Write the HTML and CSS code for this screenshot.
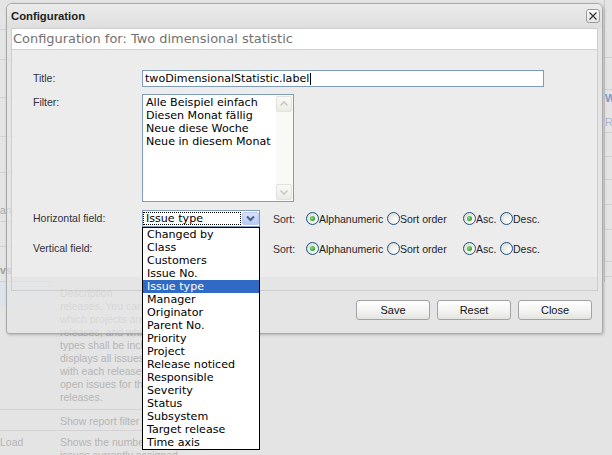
FILE: index.html
```html
<!DOCTYPE html>
<html>
<head>
<meta charset="utf-8">
<title>Configuration</title>
<link rel="stylesheet" href="styles.css">
</head>
<body>
<div class="page">
  <div class="bg-top">
    <div class="lstrip">
      <div class="lrow h30"></div>
      <div class="lrow h30"></div>
      <div class="lrow h38"></div>
      <div class="lrow h39"></div>
      <div class="lrow h36"></div>
      <div class="lrow h49 bottom-text">an</div>
      <div class="lrow h25"></div>
      <div class="lrow h35 bottom-text bold">vs</div>
    </div>
    <div class="rstrip">
      <div class="rrow h58"></div>
      <div class="rrow h32"></div>
      <div class="rrow h43"><span class="rw">W</span><span class="rre">Re</span></div>
      <div class="rrow h24"></div>
      <div class="rrow h23"></div>
      <div class="rrow h25"></div>
      <div class="rrow h25"></div>
      <div class="rrow h32"></div>
      <div class="rrow h15"></div>
    </div>
  </div>
  <div class="bg-row desc-row">
    <div class="c1"><div class="selrow"></div></div>
    <div class="c2 clip">Description<br>releases. You can define<br>which projects are<br>releases, and which issue<br>types shall be included<br>displays all issues<br>with each release<br>open issues for the<br>releases.</div>
  </div>
  <div class="bg-row filter-row">
    <div class="c1"></div>
    <div class="c2 clip">Show report filter</div>
  </div>
  <div class="bg-row load-row">
    <div class="c1">Load</div>
    <div class="c2"><span class="clipline">Shows the number of</span><br>issues currently assigned</div>
  </div>
</div>

<div class="dialog">
  <div class="titlebar">
    <span class="dtitle">Configuration</span>
    <span class="xbtn"><svg width="12" height="12" viewBox="0 0 12 12"><path d="M2.5 2.5 L9.5 9.5 M9.5 2.5 L2.5 9.5" stroke="#333" stroke-width="1.2" fill="none"/></svg></span>
  </div>
  <div class="frame">
    <div class="header">Configuration for: Two dimensional statistic</div>
    <div class="body">
      <div class="frow">
        <span class="lbl">Title:</span>
        <div class="input">twoDimensionalStatistic.label<span class="caret"></span></div>
      </div>
      <div class="frow top r2">
        <span class="lbl lbl-top">Filter:</span>
        <div class="listbox">
          <div class="items">
            <div>Alle Beispiel einfach</div>
            <div>Diesen Monat fällig</div>
            <div>Neue diese Woche</div>
            <div>Neue in diesem Monat</div>
          </div>
          <div class="sb">
            <span class="sbtn"><svg width="14" height="14" viewBox="0 0 14 14"><path d="M3.5 8.5 L7 5 L10.5 8.5" stroke="#c9c9c6" stroke-width="1.6" fill="none"/></svg></span>
            <span class="sbtn"><svg width="14" height="14" viewBox="0 0 14 14"><path d="M3.5 5.5 L7 9 L10.5 5.5" stroke="#c9c9c6" stroke-width="1.6" fill="none"/></svg></span>
          </div>
        </div>
      </div>
      <div class="frow r3">
        <span class="lbl">Horizontal field:</span>
        <div class="select open">
          <span class="val"><span class="focus">Issue type</span></span>
          <span class="arrow"><svg width="15" height="13" viewBox="0 0 15 13"><path d="M4 4.5 L7.5 8 L11 4.5" stroke="#4d6185" stroke-width="2" fill="none"/></svg></span>
          <div class="dropdown">
            <div>Changed by</div>
            <div>Class</div>
            <div>Customers</div>
            <div>Issue No.</div>
            <div class="hl">Issue type</div>
            <div>Manager</div>
            <div>Originator</div>
            <div>Parent No.</div>
            <div>Priority</div>
            <div>Project</div>
            <div>Release noticed</div>
            <div>Responsible</div>
            <div>Severity</div>
            <div>Status</div>
            <div>Subsystem</div>
            <div>Target release</div>
            <div>Time axis</div>
          </div>
        </div>
        <span class="sort">Sort:</span>
        <span class="opt o1"><span class="radio on"></span>Alphanumeric</span>
        <span class="opt o2"><span class="radio"></span>Sort order</span>
        <span class="opt o3"><span class="radio on"></span>Asc.</span>
        <span class="opt o4"><span class="radio"></span>Desc.</span>
      </div>
      <div class="frow r4">
        <span class="lbl">Vertical field:</span>
        <div class="select">
          <span class="val"></span>
          <span class="arrow"><svg width="15" height="13" viewBox="0 0 15 13"><path d="M4 4.5 L7.5 8 L11 4.5" stroke="#4d6185" stroke-width="2" fill="none"/></svg></span>
        </div>
        <span class="sort">Sort:</span>
        <span class="opt o1"><span class="radio on"></span>Alphanumeric</span>
        <span class="opt o2"><span class="radio"></span>Sort order</span>
        <span class="opt o3"><span class="radio on"></span>Asc.</span>
        <span class="opt o4"><span class="radio"></span>Desc.</span>
      </div>
    </div>
  </div>
  <div class="footer">
    <button class="btn">Save</button>
    <button class="btn">Reset</button>
    <button class="btn">Close</button>
  </div>
</div>
</body>
</html>
```

FILE: styles.css
```css
* { box-sizing: border-box; margin: 0; padding: 0; }
html, body { width: 612px; height: 455px; overflow: hidden; }
body {
  background: #e4e4e4;
  font-family: "Liberation Sans", Arial, sans-serif;
  font-size: 10.5px;
  color: #222;
  position: relative;
}

/* ---------- faded background page ---------- */
.page { width: 612px; height: 455px; color: #b5b5b5; font-size: 10.5px; }
.bg-top { display: flex; height: 282px; }
.lstrip { width: 53px; }
.lrow { border-bottom: 1px solid #d3d3d3; display: flex; padding-left: 0; }
.bottom-text { align-items: flex-end; padding-bottom: 5px; line-height: 12px; color: #a8a8a8; }
.bold { font-weight: bold; color: #a0a0a0; }
.rstrip { width: 8px; margin-left: auto; border-left: 1px solid #cbcbcb; overflow: hidden; }
.rrow { border-bottom: 1px solid #d0d0d0; display: flex; flex-direction: column; white-space: nowrap; }
.rw { color: #7f9ac4; font-weight: bold; margin-top: 2px; line-height: 12px; font-size: 11px; }
.rre { color: #a9b8cf; margin-top: 12px; line-height: 12px; font-size: 11px; }
.h15 { height: 15px; } .h23 { height: 23px; } .h24 { height: 24px; } .h25 { height: 25px; }
.h30 { height: 30px; } .h32 { height: 32px; } .h35 { height: 35px; } .h36 { height: 36px; }
.h38 { height: 38px; } .h39 { height: 39px; } .h43 { height: 43px; } .h49 { height: 49px; }
.h58 { height: 58px; }

.bg-row { display: flex; border-bottom: 1px solid #d3d3d3; width: 206px; }
.c1 { width: 60px; flex: none; }
.c2 { white-space: nowrap; line-height: 13px; overflow: hidden; flex: 1; }
.c2.clip { flex: none; width: 83px; }
.clipline { display: inline-block; width: 83px; overflow: hidden; vertical-align: top; }
.desc-row { height: 128px; }
.desc-row .c2 { padding-top: 5px; }
.selrow { width: 53px; height: 23px; background: #dde3ea; }
.filter-row { height: 21px; }
.filter-row .c2 { padding-top: 5px; }
.load-row { height: 40px; border-bottom: none; }
.load-row .c1, .load-row .c2 { padding-top: 5px; line-height: 13px; }

/* ---------- dialog ---------- */
.dialog {
  position: absolute;
  left: 6px; top: 3px;
  width: 597px; height: 331px;
  border: 1px solid #a9a9a9;
  border-radius: 6px 6px 3px 3px;
  background: rgba(230, 230, 230, 0.68);
  box-shadow: 1px 1px 3px rgba(0, 0, 0, 0.22);
  display: flex; flex-direction: column;
}
.titlebar {
  height: 24px; flex: none;
  display: flex; align-items: center; justify-content: space-between;
  padding: 0 2px 1px 4px;
  background: linear-gradient(#ebebeb, #dfdfdf);
  border-radius: 5px 5px 0 0;
}
.dtitle { font-weight: bold; font-size: 11.3px; color: #1e1e1e; }
.xbtn {
  width: 14px; height: 14px;
  border: 1px solid #9c9c9c; border-radius: 3px;
  background: linear-gradient(#fafafa, #e6e6e6);
  display: flex; align-items: center; justify-content: center;
}
.frame { margin: 0 4px; border: 1px solid #cdcdcd; padding-bottom: 13px; flex: none; }
.header {
  height: 21px; background: #fff; border-bottom: 1px solid #d2d2d2;
  font-family: "DejaVu Sans", Verdana, sans-serif;
  font-size: 12.95px; line-height: 17px; padding: 1px 0 0 1px;
  color: #727272;
  white-space: nowrap;
}
.body { height: 227px; background: #ececec; padding: 20px 0 0 21px; }
.frow { display: flex; align-items: center; }
.frow.top { align-items: flex-start; }
.r2 { margin-top: 7px; }
.r3 { margin-top: 8px; position: relative; z-index: 2; }
.r4 { margin-top: 13px; }
.lbl { width: 109px; flex: none; color: #30303a; line-height: 13px; }
.lbl-top { padding-top: 2px; }

.input, .listbox, .select, .dropdown { font-family: "DejaVu Sans", Verdana, sans-serif; font-size: 11.1px; color: #000; }
.input {
  width: 402px; height: 17px;
  border: 1px solid #7f9db9; background: #fff;
  padding-left: 2px; line-height: 15px;
  display: flex; align-items: center; white-space: nowrap;
}
.caret { display: inline-block; width: 1px; height: 12px; background: #000; margin-left: 1px; }
.listbox {
  width: 152px; height: 108px;
  border: 1px solid #7f9db9; background: #fff;
  display: flex;
}
.items { flex: 1; padding: 1px 0 0 3px; line-height: 13px; white-space: nowrap; overflow: hidden; }
.sb {
  width: 17px; flex: none; background: #f9f9f6;
  display: flex; flex-direction: column; justify-content: space-between;
  padding: 1px 1px 1px 0;
}
.sbtn {
  width: 16px; height: 16px;
  border: 1px solid #e2e2dc; border-radius: 2px;
  background: linear-gradient(#f9f9f7, #ecece6);
  display: flex; align-items: center; justify-content: center;
}
.select {
  width: 118px; height: 17px;
  border: 1px solid #7f9db9; background: #fff;
  display: flex; align-items: stretch;
  position: relative; flex: none;
}
.val { flex: 1; padding: 1px 1px 1px 0; display: flex; align-items: center; white-space: nowrap; }
.focus { display: block; width: 100%; height: 100%; border: 1px dotted #000; padding-left: 2px; line-height: 11px; }
.arrow {
  width: 17px; margin: 1px 0; flex: none;
  border: 1px solid #b9c9ef; border-radius: 2px;
  background: linear-gradient(#d7e2fb, #b7cbf6);
  display: flex; align-items: center; justify-content: center;
}
.dropdown {
  position: absolute; left: -1px; top: calc(100% + 1px);
  width: 118px;
  border: 1px solid #000; background: #fff;
  line-height: 13px; white-space: nowrap;
}
.dropdown div { height: 13px; padding-left: 4px; }
.dropdown .hl { background: #316ac5; color: #fff; }

.sort { width: 33px; margin-left: 13px; flex: none; color: #30303a; }
.opt { display: inline-flex; align-items: center; flex: none; color: #1e1e2a; white-space: nowrap; }
.o1 { width: 81px; } .o2 { width: 76px; } .o3 { width: 37px; }
.radio {
  width: 13px; height: 13px; border-radius: 50%;
  border: 1px solid #1c5180;
  background: radial-gradient(circle at 70% 70%, #ffffff 0%, #eeeeea 45%, #d2d2cc 100%);
  flex: none;
  display: flex; align-items: center; justify-content: center;
}
.radio.on::after {
  content: ""; width: 5px; height: 5px; border-radius: 50%;
  background: radial-gradient(circle at 40% 40%, #8fe48f, #21a121 70%);
}

.footer {
  flex: 1;
  display: flex; justify-content: flex-end; align-items: flex-start;
  gap: 7px; padding: 9px 10px 0 0;
}
.btn {
  width: 74px; height: 20px;
  border: 1px solid #a3a3a3; border-radius: 3px;
  background: linear-gradient(#ffffff, #f2f2f0 60%, #e3e3df);
  font-family: "Liberation Sans", Arial, sans-serif; font-size: 11px; color: #111;
}
```
